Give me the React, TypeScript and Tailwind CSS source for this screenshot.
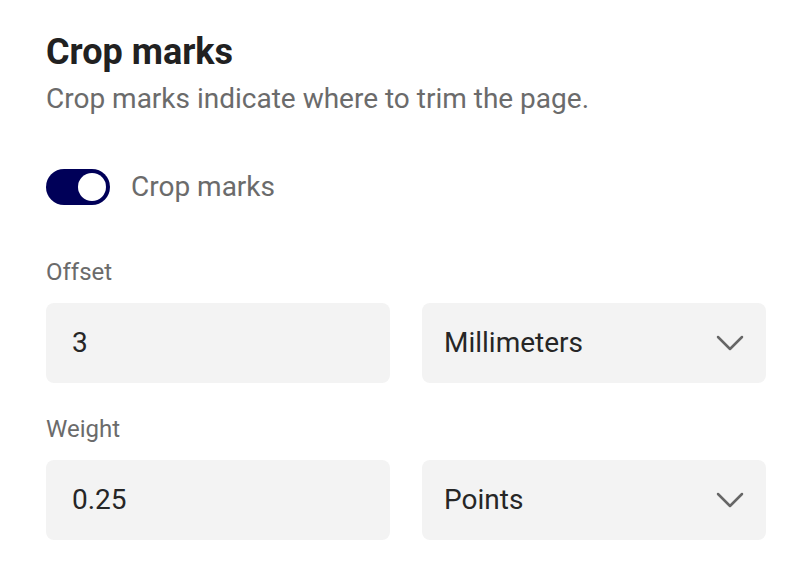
import { useState } from 'react';

function Chevron() {
  return (
    <svg width="28" height="16" viewBox="0 0 28 16" fill="none" className="text-[#666]">
      <path d="M2 2L14 14L26 2" stroke="currentColor" strokeWidth="2.5" strokeLinecap="round" strokeLinejoin="round" />
    </svg>
  );
}

function SelectBox({ value }: { value: string }) {
  return (
    <div className="flex h-[80px] items-center justify-between rounded-lg bg-[#f3f3f3] pl-[22px] pr-[22px]">
      <span className="text-[28px] text-[#262626]">{value}</span>
      <Chevron />
    </div>
  );
}

function Field({ label, amount, unit }: { label: string; amount: string; unit: string }) {
  return (
    <div>
      <div className="text-[24px] leading-[28px] text-[#6b6b6b]">{label}</div>
      <div className="mt-[17px] grid grid-cols-2 gap-[32px]">
        <div className="flex h-[80px] items-center rounded-lg bg-[#f3f3f3] px-[26px]">
          <span className="text-[28px] text-[#262626]">{amount}</span>
        </div>
        <SelectBox value={unit} />
      </div>
    </div>
  );
}

export default function App() {
  const [enabled, setEnabled] = useState(true);

  return (
    <div className="min-h-[568px] bg-white pl-[46px] pt-[32px] font-['Roboto',sans-serif]" style={{ width: 766 }}>
      <h1 className="text-[36px] font-bold leading-[40px] text-[#212121]">Crop marks</h1>
      <p className="mt-[10px] text-[28px] leading-[34px] text-[#6b6b6b]">Crop marks indicate where to trim the page.</p>

      <div className="mt-[53px] flex items-center gap-[21px]">
        <button
          onClick={() => setEnabled(!enabled)}
          className={`flex h-[36px] w-[64px] items-center rounded-full p-[4px] ${enabled ? 'justify-end bg-[#000058]' : 'justify-start bg-gray-300'}`}
        >
          <span className="h-[28px] w-[28px] rounded-full bg-white" />
        </button>
        <span className="text-[28px] leading-[36px] text-[#6b6b6b]">Crop marks</span>
      </div>

      <div className="mt-[53px] space-y-[32px]">
        <Field label="Offset" amount="3" unit="Millimeters" />
        <Field label="Weight" amount="0.25" unit="Points" />
      </div>
    </div>
  );
}
